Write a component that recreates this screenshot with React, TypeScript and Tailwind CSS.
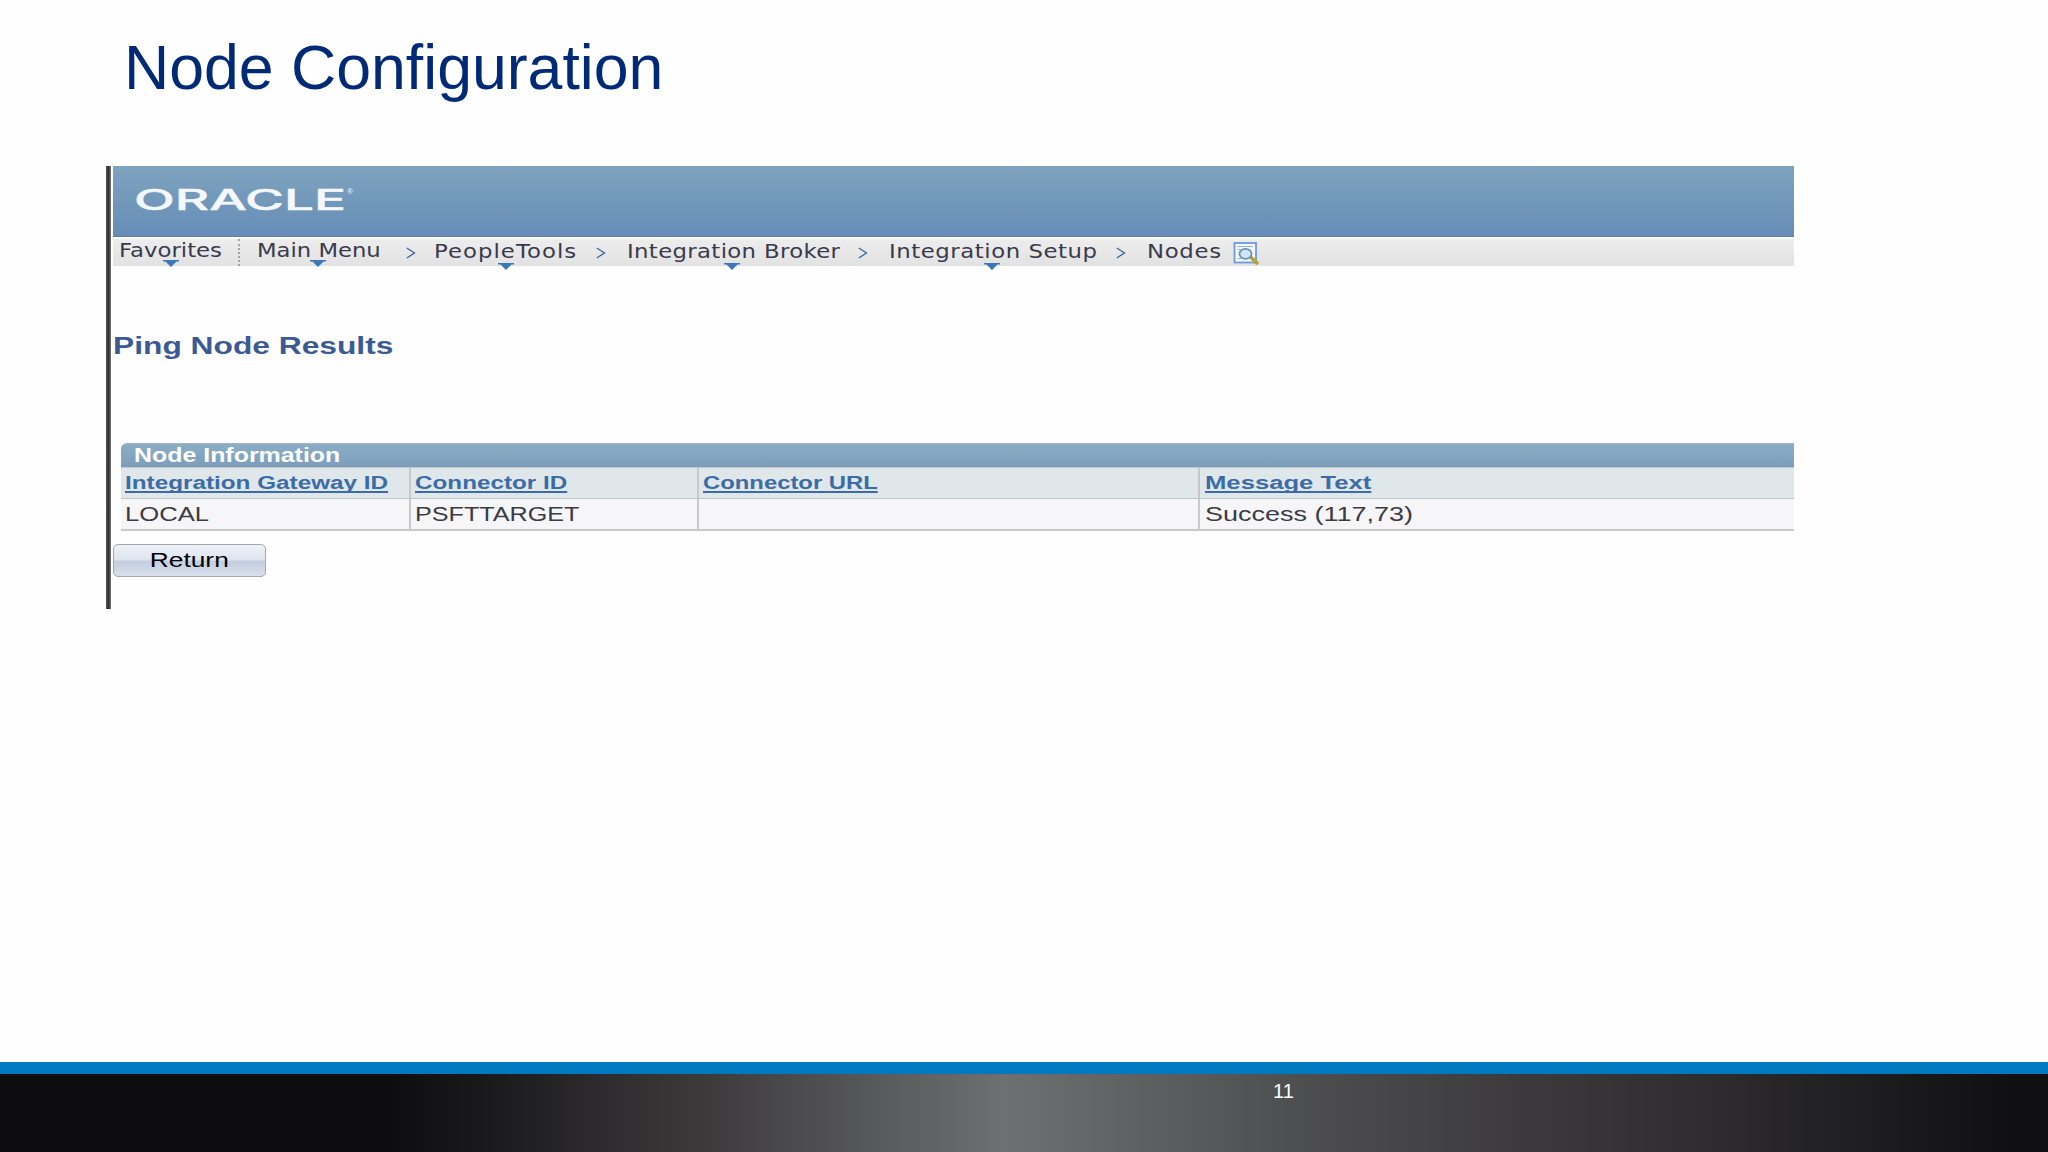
import React from 'react';

interface Crumb {
    label: string;
    // width of the slot, including the gap up to the next item
    slot: string;
    stretch: string;
    arrow?: string;
}

const CRUMBS: Crumb[] = [
    { label: 'PeopleTools', slot: 'w-[180px] pl-[18px]', stretch: 'scale-x-[1.2] tracking-[0.045em]', arrow: 'left-[82px]' },
    { label: 'Integration Broker', slot: 'w-[252px] pl-[21px]', stretch: 'scale-x-[1.2] tracking-[0.015em]', arrow: 'left-[118px]' },
    { label: 'Integration Setup', slot: 'w-[248px] pl-[21px]', stretch: 'scale-x-[1.2] tracking-[0.024em]', arrow: 'left-[116px]' },
    { label: 'Nodes', slot: 'w-[107px] pl-[21px]', stretch: 'scale-x-[1.2] tracking-[0.03em]' }
];

const COLUMNS = [
    { title: 'Integration Gateway ID', titleScale: 'scale-x-[1.349]', value: 'LOCAL', valueScale: 'scale-x-[1.28]', width: 'w-[290px] pl-[4px]' },
    { title: 'Connector ID', titleScale: 'scale-x-[1.347]', value: 'PSFTTARGET', valueScale: 'scale-x-[1.257]', width: 'w-[288px] pl-[4px]' },
    { title: 'Connector URL', titleScale: 'scale-x-[1.324]', value: '', valueScale: '', width: 'w-[501px] pl-[4px]' },
    { title: 'Message Text', titleScale: 'scale-x-[1.425]', value: 'Success (117,73)', valueScale: 'scale-x-[1.35]', width: 'w-[594px] pl-[4.5px]' }
];

const DownArrow = ({ className }: { className: string }) => (
    <svg className={`absolute h-[7px] w-[16px] ${className}`} viewBox="0 0 16 7">
        <path d="M0 0H16V1.5H13.5L8 7L2.5 1.5H0Z" fill="#3b78b5" />
    </svg>
);

const Chevron = () => (
    <svg className="mt-[8px] h-[12px] w-[10px] shrink-0" viewBox="0 0 10 12" fill="none">
        <path d="M0.8 1L8.5 6L0.8 11" stroke="#35679a" strokeWidth="1.3" />
    </svg>
);

const SearchPageIcon = () => (
    <svg className="mt-[3px] h-[23px] w-[26px] shrink-0" viewBox="0 0 26 23" fill="none">
        <rect x="1.5" y="1" width="21.5" height="19.5" fill="#f4f8fe" stroke="#6d98e2" strokeWidth="1.8" />
        <path d="M4.5 4.5H20M4.5 7.5H7M4.5 16.5H8" stroke="#8fb2ec" strokeWidth="1.2" />
        <path d="M17.5 15L25 22" stroke="#b9a32c" strokeWidth="3.6" />
        <ellipse cx="12.5" cy="11.8" rx="6" ry="5" fill="#cfe6f8" stroke="#6e8fb5" strokeWidth="1.8" />
    </svg>
);

const Breadcrumbs = () => (
    <nav className="mt-[2px] flex h-[27px] w-[1681px] bg-linear-to-b from-[#eeedee] to-[#e2e2e3] font-['DejaVu_Sans',sans-serif] text-[19px] leading-[22px] whitespace-nowrap text-[#3a3a4c]">
        <div className="relative w-[127px] border-r-2 border-dotted border-[#a4a4a8] pl-[6px]">
            <span className="inline-block origin-left scale-x-[1.2]">Favorites</span>
            <DownArrow className="top-[21px] left-[50px]" />
        </div>
        <div className="relative w-[166px] pl-[17px]">
            <span className="inline-block origin-left scale-x-[1.195]">Main Menu</span>
            <DownArrow className="top-[21px] left-[70px]" />
        </div>
        {CRUMBS.map((crumb) => (
            <React.Fragment key={crumb.label}>
                <Chevron />
                <div className={`relative shrink-0 pt-px ${crumb.slot}`}>
                    <span className={`inline-block origin-left ${crumb.stretch}`}>{crumb.label}</span>
                    {crumb.arrow && <DownArrow className={`top-[24px] ${crumb.arrow}`} />}
                </div>
            </React.Fragment>
        ))}
        <SearchPageIcon />
    </nav>
);

const NodeTable = () => (
    <section className="mt-[83px] ml-[8px] w-[1673px] whitespace-nowrap">
        <h3 className="h-[24px] rounded-tl-[6px] border-t border-[#a7b3c4] bg-linear-to-b from-[#8baec5] to-[#7c9dbb] pl-[13px] text-[19.5px] leading-[23px] font-bold text-white">
            <span className="inline-block origin-left scale-x-[1.278]">Node Information</span>
        </h3>
        <div className="flex h-[32px] border-y-[1.5px] border-[#c3c7ca] bg-[#dfe7eb]">
            {COLUMNS.map((col) => (
                <div key={col.title} className={`border-r-2 border-[#c6c8cb] last:border-r-0 ${col.width}`}>
                    <span className={`inline-block origin-left text-[18px] leading-[30px] font-bold text-[#3c6ca6] underline decoration-2 underline-offset-2 [text-decoration-skip-ink:none] ${col.titleScale}`}>
                        {col.title}
                    </span>
                </div>
            ))}
        </div>
        <div className="flex h-[32px] border-b-2 border-[#c6c8cb] bg-[#f6f6f8]">
            {COLUMNS.map((col) => (
                <div key={col.title} className={`border-r-2 border-[#c6c8cb] last:border-r-0 ${col.width}`}>
                    <span className={`inline-block origin-left text-[20px] leading-[30px] text-[#3b3b44] ${col.valueScale}`}>{col.value}</span>
                </div>
            ))}
        </div>
    </section>
);

export default function App() {
    return (
        <div className="flex h-[1152px] w-[2048px] flex-col overflow-hidden bg-[#fefefe] font-['Liberation_Sans',Arial,sans-serif]">
            <h1 className="h-[166px] pt-[31px] pl-[124px] text-[62.6px] leading-[72px] text-[#002a76]">Node Configuration</h1>

            <main className="ml-[106px] flex h-[443px]">
                <div className="w-[5px] bg-linear-to-r from-[#555] via-[#303030] to-[#777]" />
                <div className="ml-[2px] flex flex-col">
                    <header className="flex h-[71px] w-[1681px] border-b border-[#5d7fa8] bg-linear-to-b from-[#7fa3bf] to-[#658db6] pt-[17px] pl-[21px] text-[#f4f8fc]">
                        <div className="w-[213px] font-['Inter',sans-serif] text-[28px] leading-[34px] font-medium [-webkit-text-stroke:0.4px_#f4f8fc]">
                            <span className="inline-block origin-left scale-x-[1.9]">ORACLE</span>
                        </div>
                        <span className="pt-[4px] text-[8px] leading-[10px]">®</span>
                    </header>

                    <Breadcrumbs />

                    <h2 className="mt-[67px] h-[27px] text-[23px] leading-[27px] font-bold whitespace-nowrap text-[#3b5a94]">
                        <span className="inline-block origin-left scale-x-[1.38]">Ping Node Results</span>
                    </h2>

                    <NodeTable />

                    <button className="mt-[13px] h-[33px] w-[153px] rounded-[5px] border-[1.5px] border-[#a3a7b0] bg-[linear-gradient(#eef1f8_0%,#dfe4f0_48%,#c3cde0_52%,#d8dfec_100%)] text-[19.5px] text-black">
                        <span className="inline-block scale-x-[1.35]">Return</span>
                    </button>
                </div>
            </main>

            <footer className="mt-auto h-[90px] border-t-[12px] border-[#0079c0] bg-[linear-gradient(to_right,#0d0c0e_0%,#0d0c0e_19%,#1d1c1e_25%,#2c2a2c_29%,#3d3a3c_34.5%,#555658_42%,#6e6f71_49%,#6b6c6e_50.5%,#505153_62%,#3c3a3c_74%,#2e2c2f_83.5%,#1c1b1d_92%,#100f11_98%)] pt-[5px] pl-[1273px] text-[20px] leading-[24px] text-white">
                11
            </footer>
        </div>
    );
}
